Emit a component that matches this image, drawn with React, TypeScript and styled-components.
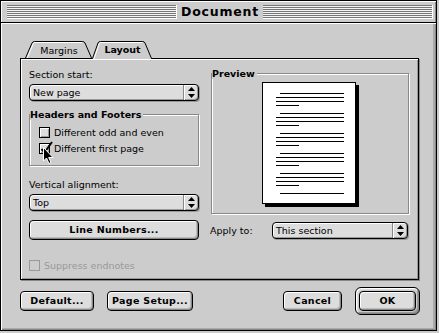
import styled, { createGlobalStyle } from 'styled-components'

const GlobalStyle = createGlobalStyle`
  html, body {
    margin: 0;
    padding: 0;
    background: #cccccc;
  }
  body {
    font-family: 'DejaVu Sans', 'Noto Sans', sans-serif;
    color: #000;
  }
`

const Window = styled.div`
  width: 437px;
  height: 331px;
  box-sizing: border-box;
  border: 1px solid #000;
  background: #cccccc;
  display: flex;
  flex-direction: column;
`

const TitleBar = styled.div`
  height: 22px;
  box-sizing: border-box;
  border-bottom: 1px solid #000;
  display: flex;
  align-items: center;
  gap: 2px;
  padding: 0 3px 0 6px;
  box-shadow: inset 1px 1px 0 #fff, inset -1px 0 0 #888;
`

const Stripes = styled.div`
  flex: 1;
  height: 13px;
  background: repeating-linear-gradient(to bottom, #777 0 1px, #f4f4f4 1px 2px);
  border-right: 1px solid #fff;
  border-bottom: 1px solid #fff;
`

const Title = styled.div`
  font-weight: bold;
  font-size: 12.5px;
  letter-spacing: 0.8px;
  line-height: 14px;
  padding: 0 2px;
`

const Body = styled.div`
  flex: 1;
  display: flex;
  flex-direction: column;
  padding: 18px 0 0 19px;
  box-shadow: inset 1px 1px 0 #fff, inset -1px -1px 0 #888, inset -3px -2px 0 #aaa;
`

const TabRow = styled.div`
  display: flex;
  height: 17px;
  margin-left: 5px;
  position: relative;
  z-index: 1;
`

const Tab = styled.div<{ $width: number; $active?: boolean }>`
  display: grid;
  width: ${({ $width }) => $width}px;
  height: ${({ $active }) => ($active ? 18 : 17)}px;
  > * {
    grid-area: 1 / 1;
  }
`

const TabLabel = styled.span<{ $active?: boolean }>`
  align-self: center;
  justify-self: center;
  font-size: 9.5px;
  font-weight: ${({ $active }) => ($active ? 'bold' : 'normal')};
  line-height: 11px;
  margin-top: ${({ $active }) => ($active ? -1 : 1)}px;
  padding-left: 1px;
`

const Panel = styled.div`
  width: 399px;
  height: 222px;
  box-sizing: border-box;
  border: 1px solid #000;
  display: flex;
  gap: 12px;
  padding: 10px 9px 0 8px;
  box-shadow: inset 1px 1px 0 #fff, inset -1px -1px 0 #999, 1px 1px 0 #888;
`

const Column = styled.div<{ $width: number }>`
  width: ${({ $width }) => $width}px;
  display: flex;
  flex-direction: column;
`

const Label = styled.div<{ $top?: number }>`
  font-size: 9.5px;
  line-height: 12px;
  margin-top: ${({ $top }) => $top ?? 0}px;
  white-space: nowrap;
`

const Popup = styled.div<{ $top?: number; $width?: number }>`
  display: flex;
  width: ${({ $width }) => ($width ? `${$width}px` : 'auto')};
  height: 17px;
  box-sizing: border-box;
  margin-top: ${({ $top }) => $top ?? 0}px;
  border: 1px solid #000;
  border-radius: 4px;
  background: #dddddd;
  box-shadow: inset 1px 1px 0 #fff, inset -1px -1px 0 #999, 1px 1px 0 #999;
`

const PopupText = styled.span`
  flex: 1;
  font-size: 9.5px;
  line-height: 15px;
  padding-left: 3px;
`

const PopupArrows = styled.span`
  width: 14px;
  display: flex;
  align-items: center;
  justify-content: center;
  border-left: 1px solid #888;
  box-shadow: inset 1px 0 0 #fff;
`

const GroupBox = styled.div<{ $top: number }>`
  position: relative;
  margin-top: ${({ $top }) => $top}px;
  border: 1px solid #888;
  box-shadow: inset 1px 1px 0 #fff, 1px 1px 0 #fff;
`

const Legend = styled.span`
  position: absolute;
  top: -6px;
  left: 0;
  background: #cccccc;
  font-size: 9.5px;
  font-weight: bold;
  line-height: 11px;
  padding-right: 2px;
`

const CheckList = styled.div`
  display: flex;
  flex-direction: column;
  gap: 5px;
  padding: 12px 0 11px 9px;
`

const CheckRow = styled.div<{ $disabled?: boolean; $top?: number }>`
  position: relative;
  display: flex;
  align-items: center;
  gap: 4px;
  height: 11px;
  margin-top: ${({ $top }) => $top ?? 0}px;
  font-size: 9.5px;
  line-height: 11px;
  color: ${({ $disabled }) => ($disabled ? '#999' : '#000')};
`

const Box = styled.span<{ $disabled?: boolean }>`
  position: relative;
  width: 11px;
  height: 11px;
  box-sizing: border-box;
  border: 1px solid ${({ $disabled }) => ($disabled ? '#999' : '#000')};
  background: ${({ $disabled }) => ($disabled ? '#cccccc' : '#dddddd')};
  box-shadow: ${({ $disabled }) =>
    $disabled ? 'none' : 'inset 1px 1px 0 #fff, inset -1px -1px 0 #999'};
  flex-shrink: 0;
`

const CheckMark = styled.svg`
  position: absolute;
  left: 0;
  top: -3px;
  overflow: visible;
`

const Cursor = styled.svg`
  position: absolute;
  left: 4px;
  top: 4px;
  overflow: visible;
`

const Button = styled.button<{ $width: number; $top?: number }>`
  width: ${({ $width }) => $width}px;
  height: 20px;
  margin-top: ${({ $top }) => $top ?? 0}px;
  box-sizing: border-box;
  padding: 0;
  border: 1px solid #000;
  border-radius: 4px;
  background: #dddddd;
  box-shadow: inset 1px 1px 0 #fff, inset -1px -1px 0 #888, inset -2px -2px 0 #bbb;
  font-family: 'DejaVu Sans', sans-serif;
  font-size: 9.5px;
  font-weight: bold;
  letter-spacing: 0.3px;
  line-height: 18px;
  color: #000;
`

const DefaultRing = styled.div`
  width: 65px;
  height: 28px;
  box-sizing: border-box;
  border: 1px solid #000;
  border-radius: 6px;
  display: flex;
  align-items: center;
  justify-content: center;
  background: #cccccc;
  box-shadow: inset 1px 1px 0 #fff, inset -1px -1px 0 #888, inset 2px 2px 0 #ddd,
    inset -2px -2px 0 #999;
`

const PreviewBox = styled(GroupBox)`
  height: 141px;
  box-sizing: border-box;
  display: flex;
  justify-content: center;
  padding-top: 8px;
`

const ApplyRow = styled.div`
  display: flex;
  align-items: center;
  margin-top: 8px;
  padding-right: 1px;
  > :first-child {
    margin-left: -1px;
  }
`

const ButtonRow = styled.div`
  display: flex;
  align-items: center;
  width: 400px;
  height: 28px;
  margin-top: 7px;
  gap: 13px;
`

const Spacer = styled.div`
  flex: 1;
`

const Arrows = () => (
  <svg width="7" height="11" viewBox="0 0 7 11">
    <path d="M3.5 0 L7 4 L0 4 Z" fill="#000" />
    <path d="M0 7 L7 7 L3.5 11 Z" fill="#000" />
  </svg>
)

const PopupMenu = ({ text, top, width }: { text: string; top?: number; width?: number }) => (
  <Popup $top={top} $width={width}>
    <PopupText>{text}</PopupText>
    <PopupArrows>
      <Arrows />
    </PopupArrows>
  </Popup>
)

const PageLines = () => {
  const groups = [0, 1, 2, 3, 4]
  return (
    <>
      {groups.map((g) => {
        const y = 11.5 + g * 20
        return (
          <g key={g} stroke="#000" strokeWidth="1">
            <line x1="18" x2="82" y1={y} y2={y} />
            <line x1="14" x2="82" y1={y + 4} y2={y + 4} />
            <line x1="14" x2="82" y1={y + 8} y2={y + 8} />
            <line x1="14" x2="37" y1={y + 12} y2={y + 12} />
          </g>
        )
      })}
      <line x1="18" x2="82" y1={111.5} y2={111.5} stroke="#000" />
    </>
  )
}

const PagePreview = () => (
  <svg width="97" height="125" viewBox="0 0 97 125">
    <rect x="3" y="3" width="94" height="122" fill="#000" />
    <rect x="0.5" y="0.5" width="93" height="121" fill="#fff" stroke="#000" />
    <PageLines />
  </svg>
)

export default function App() {
  return (
    <>
      <GlobalStyle />
      <Window>
        <TitleBar>
          <Stripes />
          <Title>Document</Title>
          <Stripes />
        </TitleBar>
        <Body>
          <TabRow>
            <Tab $width={67}>
              <svg width="67" height="17" viewBox="0 0 67 17">
                <path
                  d="M0.5 17 L7 2 Q7.7 0.5 9.5 0.5 L57.5 0.5 Q59.3 0.5 60 2 L66.5 17"
                  fill="#cccccc"
                  stroke="#000"
                />
                <path d="M2.2 17 L8.2 3 Q8.8 1.5 10 1.5 L57 1.5" fill="none" stroke="#fff" />
              </svg>
              <TabLabel>Margins</TabLabel>
            </Tab>
            <Tab $width={60} $active>
              <svg width="60" height="18" viewBox="0 0 60 18">
                <path
                  d="M0.5 18 L6 2 Q6.6 0.5 8.5 0.5 L50.5 0.5 Q52.4 0.5 53 2 L59.5 18 Z"
                  fill="#cccccc"
                  stroke="none"
                />
                <path
                  d="M0.5 17.5 L6 2 Q6.6 0.5 8.5 0.5 L50.5 0.5 Q52.4 0.5 53 2 L59.5 17.5"
                  fill="none"
                  stroke="#000"
                />
                <path d="M2 18 L7.2 3 Q7.7 1.5 9 1.5 L50 1.5" fill="none" stroke="#fff" />
              </svg>
              <TabLabel $active>Layout</TabLabel>
            </Tab>
          </TabRow>
          <Panel>
            <Column $width={170}>
              <Label>Section start:</Label>
              <PopupMenu text="New page" top={3} />
              <GroupBox $top={13}>
                <Legend>Headers and Footers</Legend>
                <CheckList>
                  <CheckRow>
                    <Box />
                    Different odd and even
                  </CheckRow>
                  <CheckRow>
                    <Box>
                      <CheckMark width="13" height="13" viewBox="0 0 13 13">
                        <path
                          d="M1.5 8 L4.5 11.5 L12 1"
                          fill="none"
                          stroke="#000"
                          strokeWidth="2"
                        />
                      </CheckMark>
                    </Box>
                    Different first page
                    <Cursor width="12" height="18" viewBox="0 0 12 18">
                      <path
                        d="M0.5 0.5 L0.5 14 L3.5 11 L6 16.5 L8 15.5 L5.7 10.5 L10 10.5 Z"
                        fill="#000"
                        stroke="#fff"
                        strokeWidth="1"
                        strokeLinejoin="miter"
                      />
                    </Cursor>
                  </CheckRow>
                </CheckList>
              </GroupBox>
              <Label $top={13}>Vertical alignment:</Label>
              <PopupMenu text="Top" top={3} />
              <Button $width={170} $top={9}>
                Line Numbers...
              </Button>
              <CheckRow $disabled $top={20}>
                <Box $disabled />
                Suppress endnotes
              </CheckRow>
            </Column>
            <Column $width={198}>
              <PreviewBox $top={4}>
                <Legend>Preview</Legend>
                <PagePreview />
              </PreviewBox>
              <ApplyRow>
                <Label>Apply to:</Label>
                <Spacer />
                <PopupMenu text="This section" width={136} />
              </ApplyRow>
            </Column>
          </Panel>
          <ButtonRow>
            <Button $width={74}>Default...</Button>
            <Button $width={86}>Page Setup...</Button>
            <Spacer />
            <Button $width={59}>Cancel</Button>
            <DefaultRing>
              <Button $width={57}>OK</Button>
            </DefaultRing>
          </ButtonRow>
        </Body>
      </Window>
    </>
  )
}
